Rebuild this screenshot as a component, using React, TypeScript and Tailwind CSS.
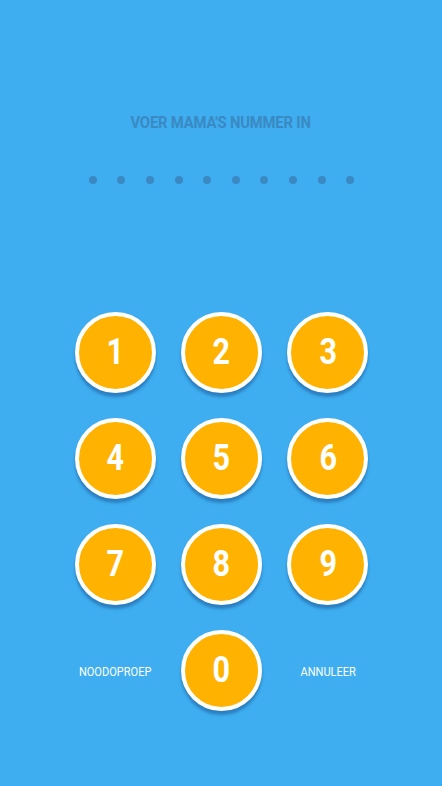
import React from "react";

const Key = ({ d }: { d: string }) => (
  <div className="flex h-[106px] items-center justify-center">
    <div className="flex h-[81px] w-[81px] items-center justify-center rounded-full border-[4px] border-white bg-[#ffb300] shadow-[0_4px_3px_rgba(30,95,160,0.6)]">
      <span className="text-[36px] font-bold leading-none text-white" style={{ fontFamily: "Roboto, sans-serif", transform: "scaleX(0.85)" }}>{d}</span>
    </div>
  </div>
);

export default function App() {
  return (
    <div className="flex h-[786px] w-[442px] flex-col items-center bg-[#3eaef0]" style={{ fontFamily: "Roboto, 'Noto Sans', sans-serif" }}>
      <div className="mt-[111px] h-[22px] whitespace-nowrap text-[17px] font-bold leading-[22px] tracking-[-0.2px] text-[#3a89c2]" style={{ transform: "scaleX(0.87)" }}>
        VOER MAMA'S NUMMER IN
      </div>
      <div className="mt-[43px] flex gap-[20.6px] pl-[1px]">
        {Array.from({ length: 10 }).map((_, i) => (
          <div key={i} className="h-[8px] w-[8px] rounded-full bg-[#3a89c2]" />
        ))}
      </div>
      <div className="mt-[115px] grid w-[320px] grid-cols-3 pl-[1px]">
        {["1", "2", "3", "4", "5", "6", "7", "8", "9"].map((d) => (
          <Key key={d} d={d} />
        ))}
        <div className="flex h-[106px] items-center justify-center pt-[3px] text-[12px] text-white" style={{ transform: "scaleX(0.92)" }}>NOODOPROEP</div>
        <Key d="0" />
        <div className="flex h-[106px] items-center justify-center pt-[3px] text-[12px] text-white" style={{ transform: "scaleX(0.92)" }}>ANNULEER</div>
      </div>
    </div>
  );
}
